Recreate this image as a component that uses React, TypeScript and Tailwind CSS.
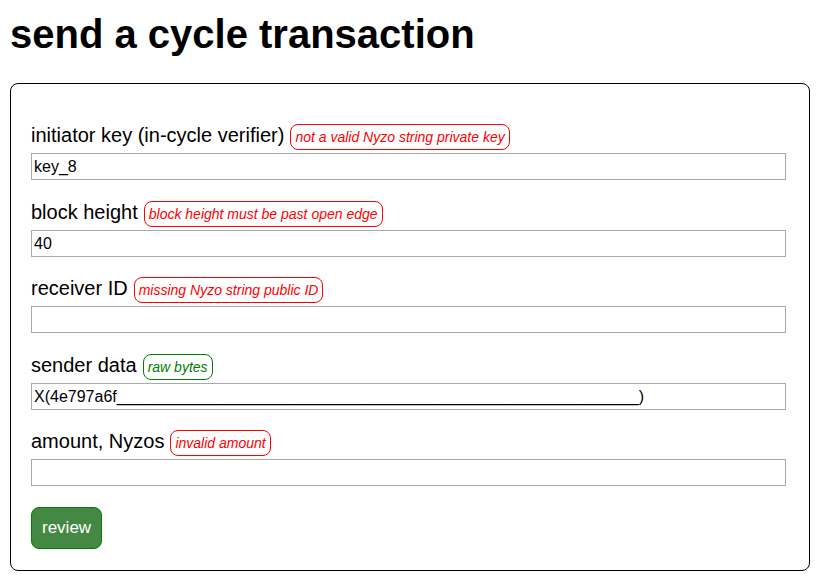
import React from "react";

type Row = { label: string; note: string; ok?: boolean; value?: React.ReactNode };

const rows: Row[] = [
  { label: "initiator key (in-cycle verifier)", note: "not a valid Nyzo string private key", value: "key_8" },
  { label: "block height", note: "block height must be past open edge", value: "40" },
  { label: "receiver ID", note: "missing Nyzo string public ID" },
  {
    label: "sender data",
    note: "raw bytes",
    ok: true,
    value: (
      <>
        X(4e797a6f
        <span className="tracking-[0.1px]">{"_".repeat(58)}</span>)
      </>
    ),
  },
  { label: "amount, Nyzos", note: "invalid amount" },
];

export default function App() {
  return (
    <div className="w-[820px] h-[580px] bg-white text-black font-['Liberation_Sans',Arial,sans-serif] overflow-hidden">
      <h1 className="ml-[10px] pt-[11px] text-[40px] leading-[46px] font-bold">send a cycle transaction</h1>
      <div className="mx-[10px] mt-[26px] w-[800px] border border-black rounded-[8px] pt-[40px] pl-[20px] pr-[23px] pb-[21px]">
        <div className="flex flex-col gap-[20.5px]">
          {rows.map((r) => (
            <div key={r.label} className="flex flex-col">
              <div className="flex items-baseline h-[26px]">
                <span className="text-[20px] leading-[23px]">{r.label}</span>
                <span
                  className={
                    r.ok
                      ? "ml-[6px] italic text-[14px] leading-[16px] px-[4px] py-[4px] border border-[#008000] text-[#008000] rounded-[8px]"
                      : "ml-[6px] italic text-[14px] leading-[16px] px-[4px] py-[4px] border border-[#ff0000] text-[#ff0000] rounded-[8px]"
                  }
                >
                  {r.note}
                </span>
              </div>
              <div className="mt-[3px] h-[27px] border border-[#a9a9a9] pl-[2px] text-[16px] leading-[25px] whitespace-nowrap overflow-hidden">
                {r.value}
              </div>
            </div>
          ))}
          <div>
            <button className="h-[42px] px-[10px] bg-[#448844] border border-[#008000] rounded-[8px] text-white text-[17px] leading-[20px]">
              review
            </button>
          </div>
        </div>
      </div>
    </div>
  );
}
